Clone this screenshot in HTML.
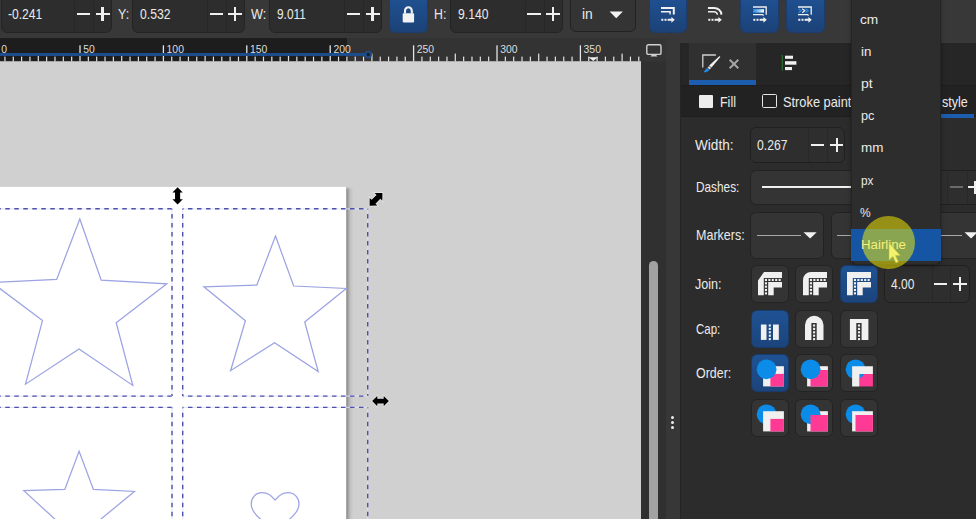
<!DOCTYPE html>
<html><head><meta charset="utf-8">
<style>
*{box-sizing:border-box;margin:0;padding:0}
html,body{width:976px;height:519px;overflow:hidden;background:#383838;font-family:"Liberation Sans",sans-serif;color:#e6e6e6;font-size:13px}
.abs{position:absolute;display:block}
#root{position:absolute;left:0;top:0;width:976px;height:519px;overflow:hidden;background:#383838}
.tx{position:absolute;display:block;white-space:nowrap;line-height:18px;height:18px;transform-origin:0 0;font-family:"Liberation Sans",sans-serif}
.pm{position:absolute;display:block;background:#efefef}
</style></head><body>
<div id="root">

<div class="abs" style="left:0px;top:0px;width:976px;height:39px;background:#383838;"></div>
<div class="abs" style="left:0.7px;top:-6px;width:111.7px;height:38.5px;background:#2d2d2d;border:1px solid #242424;border-radius:6px"></div><div class="abs" style="left:73.9px;top:-5px;width:1px;height:36.5px;background:#272727;"></div><div class="abs" style="left:93.10000000000001px;top:-5px;width:1px;height:36.5px;background:#272727;"></div><i class="pm" style="left:76.80000000000001px;top:13.35px;width:13.599999999999994px;height:2.1px"></i><i class="pm" style="left:95.5px;top:13.35px;width:14.0px;height:2.1px"></i><i class="pm" style="left:101.45px;top:7.4px;width:2.1px;height:14.0px"></i>
<span class="tx" style="left:7.50px;top:5.41px;font-size:14.8px;color:#eaeaea;transform:scaleX(0.8163);">-0.241</span>
<span class="tx" style="left:118.20px;top:5.21px;font-size:14.8px;color:#eaeaea;transform:scaleX(0.8427);">Y:</span>
<div class="abs" style="left:132.3px;top:-6px;width:113px;height:38.5px;background:#2d2d2d;border:1px solid #242424;border-radius:6px"></div><div class="abs" style="left:206.8px;top:-5px;width:1px;height:36.5px;background:#272727;"></div><div class="abs" style="left:226.0px;top:-5px;width:1px;height:36.5px;background:#272727;"></div><i class="pm" style="left:209.70000000000002px;top:13.35px;width:13.599999999999994px;height:2.1px"></i><i class="pm" style="left:228.4px;top:13.35px;width:14.0px;height:2.1px"></i><i class="pm" style="left:234.35px;top:7.4px;width:2.1px;height:14.0px"></i>
<span class="tx" style="left:139.50px;top:5.41px;font-size:14.8px;color:#eaeaea;transform:scaleX(0.8227);">0.532</span>
<span class="tx" style="left:251.00px;top:5.21px;font-size:14.8px;color:#eaeaea;transform:scaleX(0.8579);">W:</span>
<div class="abs" style="left:269.4px;top:-6px;width:113px;height:38.5px;background:#2d2d2d;border:1px solid #242424;border-radius:6px"></div><div class="abs" style="left:343.9px;top:-5px;width:1px;height:36.5px;background:#272727;"></div><div class="abs" style="left:363.09999999999997px;top:-5px;width:1px;height:36.5px;background:#272727;"></div><i class="pm" style="left:346.79999999999995px;top:13.35px;width:13.600000000000023px;height:2.1px"></i><i class="pm" style="left:365.5px;top:13.35px;width:14.0px;height:2.1px"></i><i class="pm" style="left:371.45px;top:7.4px;width:2.1px;height:14.0px"></i>
<span class="tx" style="left:276.80px;top:5.41px;font-size:14.8px;color:#eaeaea;transform:scaleX(0.8008);">9.011</span>
<div class="abs" style="left:389px;top:-6px;width:38.6px;height:39px;background:linear-gradient(#1f5091 10%,#1c4277);border:1px solid #1b3c6c;border-radius:6px"></div>
<svg class="abs" style="left:400px;top:4px;overflow:visible" width="18" height="20" viewBox="0 0 18 20"><rect x="2.7" y="9.3" width="11.4" height="9.1" rx="0.8" fill="#f2f2f2"/><path d="M5 9.5 V6.8 a3.4 3.6 0 0 1 6.8 0 V9.5" fill="none" stroke="#f2f2f2" stroke-width="2.1"/></svg>
<span class="tx" style="left:433.60px;top:5.21px;font-size:14.8px;color:#eaeaea;transform:scaleX(0.8311);">H:</span>
<div class="abs" style="left:450px;top:-6px;width:113px;height:38.5px;background:#2d2d2d;border:1px solid #242424;border-radius:6px"></div><div class="abs" style="left:524.5px;top:-5px;width:1px;height:36.5px;background:#272727;"></div><div class="abs" style="left:543.7px;top:-5px;width:1px;height:36.5px;background:#272727;"></div><i class="pm" style="left:527.4px;top:13.35px;width:13.600000000000023px;height:2.1px"></i><i class="pm" style="left:546.1px;top:13.35px;width:14.0px;height:2.1px"></i><i class="pm" style="left:552.0500000000001px;top:7.4px;width:2.1px;height:14.0px"></i>
<span class="tx" style="left:457.50px;top:5.41px;font-size:14.8px;color:#eaeaea;transform:scaleX(0.8227);">9.140</span>
<div class="abs" style="left:569.7px;top:-6px;width:66px;height:38.3px;background:#343434;border:1px solid #222;border-radius:6px"></div>
<span class="tx" style="left:582.40px;top:5.41px;font-size:14.8px;color:#eaeaea;transform:scaleX(0.9356);">in</span>
<svg class="abs" style="left:608.5px;top:10.6px;overflow:visible" width="15" height="8" viewBox="0 0 15 8"><path d="M0.6 0.6 H13.9 L7.25 7.2 Z" fill="#f2f2f2"/></svg>
<div class="abs" style="left:648.8px;top:-6px;width:38.5px;height:38.8px;background:linear-gradient(#1f5091 10%,#1c4277);border:1px solid #1b3c6c;border-radius:6px"></div>
<div class="abs" style="left:740.1px;top:-6px;width:38.5px;height:38.8px;background:linear-gradient(#1f5091 10%,#1c4277);border:1px solid #1b3c6c;border-radius:6px"></div>
<div class="abs" style="left:786px;top:-6px;width:38.5px;height:38.8px;background:linear-gradient(#1f5091 10%,#1c4277);border:1px solid #1b3c6c;border-radius:6px"></div>
<svg class="abs" style="left:661px;top:0px;overflow:visible" width="16" height="24" viewBox="0 0 16 24"><path d="M0 7.9 H12.8 V14.4" fill="none" stroke="#f0f0f0" stroke-width="2"/><path d="M0 11.7 H9.1 V14.4" fill="none" stroke="#f0f0f0" stroke-width="1.4"/><rect x="0.3" y="18.8" width="2" height="2" fill="#f0f0f0"/><rect x="3.5" y="18.8" width="2" height="2" fill="#f0f0f0"/><rect x="6.6" y="18.8" width="2" height="2" fill="#f0f0f0"/><path d="M8.2 18.8 H10.4 V16.9 L13.8 19.8 L10.4 22.7 V20.8 H8.2 Z" fill="#f0f0f0"/></svg>
<svg class="abs" style="left:707.6px;top:0px;overflow:visible" width="16" height="24" viewBox="0 0 16 24"><path d="M0 7.9 H6 A7.2 7 0 0 1 13.4 14.6" fill="none" stroke="#f0f0f0" stroke-width="2"/><path d="M0 11.7 H5.5 A3.8 3.4 0 0 1 9.4 14.8" fill="none" stroke="#f0f0f0" stroke-width="1.4"/><rect x="0.3" y="18.8" width="2" height="2" fill="#f0f0f0"/><rect x="3.5" y="18.8" width="2" height="2" fill="#f0f0f0"/><rect x="6.6" y="18.8" width="2" height="2" fill="#f0f0f0"/><path d="M8.2 18.8 H10.4 V16.9 L13.8 19.8 L10.4 22.7 V20.8 H8.2 Z" fill="#f0f0f0"/></svg>
<svg class="abs" style="left:752.6px;top:0px;overflow:visible" width="16" height="24" viewBox="0 0 16 24"><path d="M0 7 H13.2 V14.8" fill="none" stroke="#f0f0f0" stroke-width="1.3"/><defs><linearGradient id="gc" x1="0" x2="1"><stop offset="0" stop-color="#1e8be6"/><stop offset="0.55" stop-color="#8fc8f4"/><stop offset="1" stop-color="#ffffff"/></linearGradient></defs><rect x="0" y="9.2" width="11" height="3.4" fill="url(#gc)"/><path d="M0 14.6 H9.5 L10.6 15.6" fill="none" stroke="#f0f0f0" stroke-width="1.4"/><rect x="0.3" y="18.8" width="2" height="2" fill="#f0f0f0"/><rect x="3.5" y="18.8" width="2" height="2" fill="#f0f0f0"/><rect x="6.6" y="18.8" width="2" height="2" fill="#f0f0f0"/><path d="M8.2 18.8 H10.4 V16.9 L13.8 19.8 L10.4 22.7 V20.8 H8.2 Z" fill="#f0f0f0"/></svg>
<svg class="abs" style="left:798.4px;top:0px;overflow:visible" width="16" height="24" viewBox="0 0 16 24"><path d="M0 7 H13.2 V14.8" fill="none" stroke="#f0f0f0" stroke-width="1.3"/><path d="M0.6 8.8 L3.2 10.8 L0.6 12.8" fill="none" stroke="#2a8de6" stroke-width="1.2"/><path d="M4.2 8.8 L6.8 10.8 L4.2 12.8" fill="none" stroke="#f0f0f0" stroke-width="1.2"/><path d="M7.6 8.8 L10.2 10.8 L7.6 12.8" fill="none" stroke="#2a8de6" stroke-width="1.2"/><path d="M0 14.6 H9.5 L10.6 15.6" fill="none" stroke="#f0f0f0" stroke-width="1.4"/><rect x="0.3" y="18.8" width="2" height="2" fill="#f0f0f0"/><rect x="3.5" y="18.8" width="2" height="2" fill="#f0f0f0"/><rect x="6.6" y="18.8" width="2" height="2" fill="#f0f0f0"/><path d="M8.2 18.8 H10.4 V16.9 L13.8 19.8 L10.4 22.7 V20.8 H8.2 Z" fill="#f0f0f0"/></svg>
<svg class="abs" style="left:0px;top:38px;overflow:visible" width="641" height="24" viewBox="0 0 641 24"><rect x="0" y="0" width="641" height="24" fill="#333333"/><rect x="0" y="0.1" width="347" height="23.9" fill="#1d1d1d"/><rect x="4.34" y="18.6" width="1.2" height="4.8" fill="#e4e4e4"/><rect x="12.68" y="18.6" width="1.2" height="4.8" fill="#e4e4e4"/><rect x="21.02" y="18.6" width="1.2" height="4.8" fill="#e4e4e4"/><rect x="29.36" y="18.6" width="1.2" height="4.8" fill="#e4e4e4"/><rect x="37.70" y="15.6" width="1.2" height="7.8" fill="#e4e4e4"/><rect x="46.04" y="18.6" width="1.2" height="4.8" fill="#e4e4e4"/><rect x="54.38" y="18.6" width="1.2" height="4.8" fill="#e4e4e4"/><rect x="62.72" y="18.6" width="1.2" height="4.8" fill="#e4e4e4"/><rect x="71.06" y="18.6" width="1.2" height="4.8" fill="#e4e4e4"/><rect x="79.35" y="7.3" width="1.3" height="16.1" fill="#e4e4e4"/><text x="83.2" y="15.3" font-size="10.4" fill="#dcdcdc" font-family="Liberation Sans, sans-serif">50</text><rect x="87.74" y="18.6" width="1.2" height="4.8" fill="#e4e4e4"/><rect x="96.08" y="18.6" width="1.2" height="4.8" fill="#e4e4e4"/><rect x="104.42" y="18.6" width="1.2" height="4.8" fill="#e4e4e4"/><rect x="112.76" y="18.6" width="1.2" height="4.8" fill="#e4e4e4"/><rect x="121.10" y="15.6" width="1.2" height="7.8" fill="#e4e4e4"/><rect x="129.44" y="18.6" width="1.2" height="4.8" fill="#e4e4e4"/><rect x="137.78" y="18.6" width="1.2" height="4.8" fill="#e4e4e4"/><rect x="146.12" y="18.6" width="1.2" height="4.8" fill="#e4e4e4"/><rect x="154.46" y="18.6" width="1.2" height="4.8" fill="#e4e4e4"/><rect x="162.75" y="7.3" width="1.3" height="16.1" fill="#e4e4e4"/><text x="166.6" y="15.3" font-size="10.4" fill="#dcdcdc" font-family="Liberation Sans, sans-serif">100</text><rect x="171.14" y="18.6" width="1.2" height="4.8" fill="#e4e4e4"/><rect x="179.48" y="18.6" width="1.2" height="4.8" fill="#e4e4e4"/><rect x="187.82" y="18.6" width="1.2" height="4.8" fill="#e4e4e4"/><rect x="196.16" y="18.6" width="1.2" height="4.8" fill="#e4e4e4"/><rect x="204.50" y="15.6" width="1.2" height="7.8" fill="#e4e4e4"/><rect x="212.84" y="18.6" width="1.2" height="4.8" fill="#e4e4e4"/><rect x="221.18" y="18.6" width="1.2" height="4.8" fill="#e4e4e4"/><rect x="229.52" y="18.6" width="1.2" height="4.8" fill="#e4e4e4"/><rect x="237.86" y="18.6" width="1.2" height="4.8" fill="#e4e4e4"/><rect x="246.15" y="7.3" width="1.3" height="16.1" fill="#e4e4e4"/><text x="250.0" y="15.3" font-size="10.4" fill="#dcdcdc" font-family="Liberation Sans, sans-serif">150</text><rect x="254.54" y="18.6" width="1.2" height="4.8" fill="#e4e4e4"/><rect x="262.88" y="18.6" width="1.2" height="4.8" fill="#e4e4e4"/><rect x="271.22" y="18.6" width="1.2" height="4.8" fill="#e4e4e4"/><rect x="279.56" y="18.6" width="1.2" height="4.8" fill="#e4e4e4"/><rect x="287.90" y="15.6" width="1.2" height="7.8" fill="#e4e4e4"/><rect x="296.24" y="18.6" width="1.2" height="4.8" fill="#e4e4e4"/><rect x="304.58" y="18.6" width="1.2" height="4.8" fill="#e4e4e4"/><rect x="312.92" y="18.6" width="1.2" height="4.8" fill="#e4e4e4"/><rect x="321.26" y="18.6" width="1.2" height="4.8" fill="#e4e4e4"/><rect x="329.55" y="7.3" width="1.3" height="16.1" fill="#e4e4e4"/><text x="333.4" y="15.3" font-size="10.4" fill="#dcdcdc" font-family="Liberation Sans, sans-serif">200</text><rect x="337.94" y="18.6" width="1.2" height="4.8" fill="#e4e4e4"/><rect x="346.28" y="18.6" width="1.2" height="4.8" fill="#e4e4e4"/><rect x="354.62" y="18.6" width="1.2" height="4.8" fill="#e4e4e4"/><rect x="362.96" y="18.6" width="1.2" height="4.8" fill="#e4e4e4"/><rect x="371.30" y="15.6" width="1.2" height="7.8" fill="#e4e4e4"/><rect x="379.64" y="18.6" width="1.2" height="4.8" fill="#e4e4e4"/><rect x="387.98" y="18.6" width="1.2" height="4.8" fill="#e4e4e4"/><rect x="396.32" y="18.6" width="1.2" height="4.8" fill="#e4e4e4"/><rect x="404.66" y="18.6" width="1.2" height="4.8" fill="#e4e4e4"/><rect x="412.95" y="7.3" width="1.3" height="16.1" fill="#e4e4e4"/><text x="416.8" y="15.3" font-size="10.4" fill="#dcdcdc" font-family="Liberation Sans, sans-serif">250</text><rect x="421.34" y="18.6" width="1.2" height="4.8" fill="#e4e4e4"/><rect x="429.68" y="18.6" width="1.2" height="4.8" fill="#e4e4e4"/><rect x="438.02" y="18.6" width="1.2" height="4.8" fill="#e4e4e4"/><rect x="446.36" y="18.6" width="1.2" height="4.8" fill="#e4e4e4"/><rect x="454.70" y="15.6" width="1.2" height="7.8" fill="#e4e4e4"/><rect x="463.04" y="18.6" width="1.2" height="4.8" fill="#e4e4e4"/><rect x="471.38" y="18.6" width="1.2" height="4.8" fill="#e4e4e4"/><rect x="479.72" y="18.6" width="1.2" height="4.8" fill="#e4e4e4"/><rect x="488.06" y="18.6" width="1.2" height="4.8" fill="#e4e4e4"/><rect x="496.35" y="7.3" width="1.3" height="16.1" fill="#e4e4e4"/><text x="500.2" y="15.3" font-size="10.4" fill="#dcdcdc" font-family="Liberation Sans, sans-serif">300</text><rect x="504.74" y="18.6" width="1.2" height="4.8" fill="#e4e4e4"/><rect x="513.08" y="18.6" width="1.2" height="4.8" fill="#e4e4e4"/><rect x="521.42" y="18.6" width="1.2" height="4.8" fill="#e4e4e4"/><rect x="529.76" y="18.6" width="1.2" height="4.8" fill="#e4e4e4"/><rect x="538.10" y="15.6" width="1.2" height="7.8" fill="#e4e4e4"/><rect x="546.44" y="18.6" width="1.2" height="4.8" fill="#e4e4e4"/><rect x="554.78" y="18.6" width="1.2" height="4.8" fill="#e4e4e4"/><rect x="563.12" y="18.6" width="1.2" height="4.8" fill="#e4e4e4"/><rect x="571.46" y="18.6" width="1.2" height="4.8" fill="#e4e4e4"/><rect x="579.75" y="7.3" width="1.3" height="16.1" fill="#e4e4e4"/><text x="583.6" y="15.3" font-size="10.4" fill="#dcdcdc" font-family="Liberation Sans, sans-serif">350</text><rect x="588.14" y="18.6" width="1.2" height="4.8" fill="#e4e4e4"/><rect x="596.48" y="18.6" width="1.2" height="4.8" fill="#e4e4e4"/><rect x="604.82" y="18.6" width="1.2" height="4.8" fill="#e4e4e4"/><rect x="613.16" y="18.6" width="1.2" height="4.8" fill="#e4e4e4"/><rect x="621.50" y="15.6" width="1.2" height="7.8" fill="#e4e4e4"/><rect x="629.84" y="18.6" width="1.2" height="4.8" fill="#e4e4e4"/><rect x="638.18" y="18.6" width="1.2" height="4.8" fill="#e4e4e4"/><rect x="0" y="15" width="366" height="3" fill="#1c4d8a"/><text x="1.3" y="15.3" font-size="10.4" fill="#dcdcdc" font-family="Liberation Sans, sans-serif">0</text><circle cx="368.3" cy="16.5" r="2.7" fill="#1c1c1c" stroke="#1c4d8a" stroke-width="2"/><rect x="0" y="23.3" width="641" height="0.7" fill="#e2e2e2"/><path d="M588.5 19.3 H598 L593.25 23 Z" fill="#f0f0f0"/></svg>
<svg class="abs" style="left:0;top:62px" width="641" height="457" viewBox="0 62 641 457"><rect x="0" y="62" width="641" height="457" fill="#d0d0d0"/><defs><linearGradient id="sh" x1="0" x2="1" y1="0" y2="0"><stop offset="0" stop-color="#7c7c7c"/><stop offset="0.25" stop-color="#a2a2a2"/><stop offset="0.6" stop-color="#c3c3c3"/><stop offset="1" stop-color="#d0d0d0"/></linearGradient><linearGradient id="sh2" x1="0" x2="0" y1="0" y2="1"><stop offset="0" stop-color="#d0d0d0"/><stop offset="1" stop-color="#d0d0d0" stop-opacity="0"/></linearGradient></defs><rect x="346.2" y="187" width="7.3" height="332" fill="url(#sh)"/><rect x="346.2" y="186.5" width="7.5" height="3.5" fill="url(#sh2)"/><rect x="-5" y="186.9" width="351.2" height="340" fill="#ffffff"/><polygon points="79.8,219 101.2,280.2 166.8,283.8 116.2,322.7 132.8,385.4 79,349 25.5,384.2 42.5,320.6 -8,282.6 56.7,279.4" fill="none" stroke="#9ca3e3" stroke-width="1.25"/><polygon points="275.5,236 293.7,286 346.2,288.5 304.7,322 318.2,371.5 274.6,342.7 230.6,370.7 245.4,320.7 203.9,286.8 256.8,285.1" fill="none" stroke="#9ca3e3" stroke-width="1.25"/><polyline points="100.4,519.5 134.4,491.5 93.4,489.4 79.1,451.3 64.8,489.4 23.8,490.7 55.3,519.5" fill="none" stroke="#9ca3e3" stroke-width="1.25"/><path d="M275.1 500.2 C271 494.8 266.5 492.7 262.3 492.7 C255.5 492.7 251.2 498 251.2 504 C251.2 510.5 255.5 515 261.5 520 M275.1 500.2 C279.2 494.8 283.7 492.7 287.9 492.7 C294.7 492.7 299 498 299 504 C299 510.5 294.7 515 288.7 520" fill="none" stroke="#9ca3e3" stroke-width="1.25"/><line x1="0" y1="208.8" x2="172.0" y2="208.8" stroke="#dfe1f7" stroke-opacity="0.75" stroke-width="1.2"/><line x1="0" y1="208.8" x2="172.0" y2="208.8" stroke="#4b52a8" stroke-width="1.4" stroke-dasharray="4.5 4.5" stroke-dashoffset="3.7"/><line x1="172.0" y1="208.8" x2="172.0" y2="396.1" stroke="#dfe1f7" stroke-opacity="0.75" stroke-width="1.2"/><line x1="172.0" y1="208.8" x2="172.0" y2="396.1" stroke="#4b52a8" stroke-width="1.4" stroke-dasharray="4.5 4.5" stroke-dashoffset="3.7"/><line x1="0" y1="396.1" x2="172.0" y2="396.1" stroke="#dfe1f7" stroke-opacity="0.75" stroke-width="1.2"/><line x1="0" y1="396.1" x2="172.0" y2="396.1" stroke="#4b52a8" stroke-width="1.4" stroke-dasharray="4.5 4.5" stroke-dashoffset="3.7"/><line x1="182.7" y1="208.8" x2="367.7" y2="208.8" stroke="#dfe1f7" stroke-opacity="0.75" stroke-width="1.2"/><line x1="182.7" y1="208.8" x2="367.7" y2="208.8" stroke="#4b52a8" stroke-width="1.4" stroke-dasharray="4.5 4.5" stroke-dashoffset="3.7"/><line x1="367.7" y1="208.8" x2="367.7" y2="396.1" stroke="#dfe1f7" stroke-opacity="0.75" stroke-width="1.2"/><line x1="367.7" y1="208.8" x2="367.7" y2="396.1" stroke="#4b52a8" stroke-width="1.4" stroke-dasharray="4.5 4.5" stroke-dashoffset="3.7"/><line x1="182.7" y1="396.1" x2="367.7" y2="396.1" stroke="#dfe1f7" stroke-opacity="0.75" stroke-width="1.2"/><line x1="182.7" y1="396.1" x2="367.7" y2="396.1" stroke="#4b52a8" stroke-width="1.4" stroke-dasharray="4.5 4.5" stroke-dashoffset="3.7"/><line x1="182.7" y1="208.8" x2="182.7" y2="396.1" stroke="#dfe1f7" stroke-opacity="0.75" stroke-width="1.2"/><line x1="182.7" y1="208.8" x2="182.7" y2="396.1" stroke="#4b52a8" stroke-width="1.4" stroke-dasharray="4.5 4.5" stroke-dashoffset="3.7"/><line x1="0" y1="407.4" x2="172.0" y2="407.4" stroke="#dfe1f7" stroke-opacity="0.75" stroke-width="1.2"/><line x1="0" y1="407.4" x2="172.0" y2="407.4" stroke="#4b52a8" stroke-width="1.4" stroke-dasharray="4.5 4.5" stroke-dashoffset="3.7"/><line x1="172.0" y1="407.4" x2="172.0" y2="520" stroke="#dfe1f7" stroke-opacity="0.75" stroke-width="1.2"/><line x1="172.0" y1="407.4" x2="172.0" y2="520" stroke="#4b52a8" stroke-width="1.4" stroke-dasharray="4.5 4.5" stroke-dashoffset="3.7"/><line x1="182.7" y1="407.4" x2="367.7" y2="407.4" stroke="#dfe1f7" stroke-opacity="0.75" stroke-width="1.2"/><line x1="182.7" y1="407.4" x2="367.7" y2="407.4" stroke="#4b52a8" stroke-width="1.4" stroke-dasharray="4.5 4.5" stroke-dashoffset="3.7"/><line x1="182.7" y1="407.4" x2="182.7" y2="520" stroke="#dfe1f7" stroke-opacity="0.75" stroke-width="1.2"/><line x1="182.7" y1="407.4" x2="182.7" y2="520" stroke="#4b52a8" stroke-width="1.4" stroke-dasharray="4.5 4.5" stroke-dashoffset="3.7"/><line x1="367.7" y1="407.4" x2="367.7" y2="520" stroke="#dfe1f7" stroke-opacity="0.75" stroke-width="1.2"/><line x1="367.7" y1="407.4" x2="367.7" y2="520" stroke="#4b52a8" stroke-width="1.4" stroke-dasharray="4.5 4.5" stroke-dashoffset="3.7"/><g transform="translate(177.6,195.9) rotate(0) scale(1)"><path d="M0 -8.6 L5.2 -3.3 H2.55 V3.3 H5.2 L0 8.6 L-5.2 3.3 H-2.55 V-3.3 H-5.2 Z" fill="#000" stroke="rgba(255,255,255,0.45)" stroke-width="1.6" paint-order="stroke"/></g><g transform="translate(380.5,401.1) rotate(90) scale(0.97)"><path d="M0 -8.6 L5.2 -3.3 H2.55 V3.3 H5.2 L0 8.6 L-5.2 3.3 H-2.55 V-3.3 H-5.2 Z" fill="#000" stroke="rgba(255,255,255,0.45)" stroke-width="1.6" paint-order="stroke"/></g><g transform="translate(376,199.3) rotate(45) scale(1.05)"><path d="M0 -8.6 L5.2 -3.3 H2.55 V3.3 H5.2 L0 8.6 L-5.2 3.3 H-2.55 V-3.3 H-5.2 Z" fill="#000" stroke="rgba(255,255,255,0.45)" stroke-width="1.6" paint-order="stroke"/></g></svg>
<div class="abs" style="left:641px;top:38px;width:25px;height:481px;background:#303030;"></div>
<div class="abs" style="left:641px;top:38px;width:25px;height:24px;background:#343434;"></div>
<div class="abs" style="left:666px;top:38px;width:14px;height:481px;background:#373737;"></div>
<svg class="abs" style="left:646px;top:43.6px;overflow:visible" width="16" height="14" viewBox="0 0 16 14"><rect x="0.8" y="0.8" width="14.2" height="9.6" rx="1.5" fill="none" stroke="#d0d0d0" stroke-width="1.4"/><path d="M5.8 10.8 H10 L11.4 12.4 H4.4 Z" fill="#d0d0d0"/></svg>
<div class="abs" style="left:670.6px;top:415.5px;width:3.7px;height:3.7px;background:#ececec;border-radius:50%"></div>
<div class="abs" style="left:670.6px;top:420.6px;width:3.7px;height:3.7px;background:#ececec;border-radius:50%"></div>
<div class="abs" style="left:670.6px;top:425.7px;width:3.7px;height:3.7px;background:#ececec;border-radius:50%"></div>
<div class="abs" style="left:649.2px;top:260.6px;width:9.2px;height:270px;background:#a2a2a2;border-radius:4.6px"></div>
<div class="abs" style="left:680px;top:43px;width:296px;height:476px;background:#2c2c2c;"></div>
<div class="abs" style="left:680px;top:43px;width:296px;height:42px;background:#262626;"></div>
<div class="abs" style="left:689px;top:43px;width:67.3px;height:42px;background:#303030;"></div>
<div class="abs" style="left:689px;top:80px;width:67.3px;height:5px;background:#1c5db0;"></div>
<div class="abs" style="left:680px;top:85px;width:296px;height:31px;background:#222222;"></div>
<div class="abs" style="left:680px;top:85px;width:296px;height:1px;background:#1e1e1e;"></div>
<div class="abs" style="left:680px;top:115.5px;width:296px;height:1px;background:#1e1e1e;"></div>
<div class="abs" style="left:698.7px;top:94.5px;width:14.3px;height:13.8px;background:#ececec;border-radius:1px"></div>
<span class="tx" style="left:720.00px;top:93.11px;font-size:14.8px;color:#eaeaea;transform:scaleX(0.8426);">Fill</span>
<div class="abs" style="left:762.2px;top:94.4px;width:14.4px;height:13.9px;background:transparent;border:1.6px solid #e6e6e6;border-radius:1.5px"></div>
<span class="tx" style="left:783.40px;top:92.91px;font-size:14.8px;color:#eaeaea;transform:scaleX(0.8653);">Stroke paint</span>
<span class="tx" style="left:941.80px;top:92.91px;font-size:14.8px;color:#eaeaea;transform:scaleX(0.8483);">style</span>
<div class="abs" style="left:941px;top:114px;width:33px;height:3.6px;background:#1c5db0;"></div>
<div class="abs" style="left:680px;top:43px;width:1px;height:476px;background:#242424;"></div>
<span class="tx" style="left:694.75px;top:135.61px;font-size:14.8px;color:#eaeaea;transform:scaleX(0.9188);">Width:</span>
<span class="tx" style="left:695.60px;top:177.81px;font-size:14.8px;color:#eaeaea;transform:scaleX(0.7990);">Dashes:</span>
<span class="tx" style="left:695.60px;top:225.81px;font-size:14.8px;color:#eaeaea;transform:scaleX(0.8459);">Markers:</span>
<span class="tx" style="left:694.50px;top:274.71px;font-size:14.8px;color:#eaeaea;transform:scaleX(0.8518);">Join:</span>
<span class="tx" style="left:695.70px;top:319.61px;font-size:14.8px;color:#eaeaea;transform:scaleX(0.7749);">Cap:</span>
<span class="tx" style="left:695.70px;top:364.01px;font-size:14.8px;color:#eaeaea;transform:scaleX(0.8413);">Order:</span>
<div class="abs" style="left:749.7px;top:126.6px;width:95.6px;height:36.8px;background:#2e2e2e;border:1px solid #202020;border-radius:6px"></div><div class="abs" style="left:808px;top:127.6px;width:1px;height:34.8px;background:#282828;"></div><div class="abs" style="left:827px;top:127.6px;width:1px;height:34.8px;background:#282828;"></div><i class="pm" style="left:811px;top:143.95px;width:12.5px;height:2.1px"></i><i class="pm" style="left:830px;top:143.95px;width:13.399999999999977px;height:2.1px"></i><i class="pm" style="left:835.6500000000001px;top:138.3px;width:2.1px;height:13.399999999999977px"></i>
<span class="tx" style="left:757.00px;top:135.71px;font-size:14.8px;color:#eaeaea;transform:scaleX(0.8227);">0.267</span>
<div class="abs" style="left:749.7px;top:169.6px;width:160px;height:35.6px;background:#343434;border:1px solid #222;border-radius:6px"></div>
<div class="abs" style="left:762px;top:186.3px;width:100px;height:2px;background:#f0f0f0;"></div>
<div class="abs" style="left:916px;top:169.6px;width:80px;height:35.6px;background:#2e2e2e;border:1px solid #202020;border-radius:6px"></div>
<div class="abs" style="left:947.4px;top:170.6px;width:1px;height:33.6px;background:#282828;"></div><div class="abs" style="left:966.8px;top:170.6px;width:1px;height:33.6px;background:#282828;"></div>
<div class="abs" style="left:950.3px;top:186.4px;width:12.7px;height:2px;background:#6a6a6a;"></div>
<i class="pm" style="left:968.3px;top:186.4px;width:13.4px;height:2.1px"></i><i class="pm" style="left:974px;top:180.7px;width:2.1px;height:13.4px"></i>
<div class="abs" style="left:750.3px;top:211.6px;width:73.8px;height:47.2px;background:#343434;border:1px solid #222;border-radius:6px"></div><div class="abs" style="left:756.5999999999999px;top:235.1px;width:44.5px;height:1px;background:#a8a8a8;"></div><svg class="abs" style="left:802.8px;top:232px;overflow:visible" width="15" height="8" viewBox="0 0 15 8"><path d="M0.5 0.2 H13.7 L7.1 6.6 Z" fill="#f2f2f2"/></svg><div class="abs" style="left:830.9px;top:211.6px;width:73.8px;height:47.2px;background:#343434;border:1px solid #222;border-radius:6px"></div><div class="abs" style="left:837.1999999999999px;top:235.1px;width:44.5px;height:1px;background:#a8a8a8;"></div><svg class="abs" style="left:883.4px;top:232px;overflow:visible" width="15" height="8" viewBox="0 0 15 8"><path d="M0.5 0.2 H13.7 L7.1 6.6 Z" fill="#f2f2f2"/></svg><div class="abs" style="left:911.5px;top:211.6px;width:73.8px;height:47.2px;background:#343434;border:1px solid #222;border-radius:6px"></div><div class="abs" style="left:917.8px;top:235.1px;width:44.5px;height:1px;background:#a8a8a8;"></div><svg class="abs" style="left:964.0px;top:232px;overflow:visible" width="15" height="8" viewBox="0 0 15 8"><path d="M0.5 0.2 H13.7 L7.1 6.6 Z" fill="#f2f2f2"/></svg>
<div class="abs" style="left:750.6px;top:265px;width:38px;height:38px;background:#343434;border:1px solid #232323;border-radius:6px"></div><div class="abs" style="left:750.6px;top:309.7px;width:38px;height:38px;background:linear-gradient(#1f5293,#1c447c);border:1px solid #1a3a68;border-radius:6px"></div><div class="abs" style="left:750.6px;top:354.3px;width:38px;height:38px;background:linear-gradient(#1f5293,#1c447c);border:1px solid #1a3a68;border-radius:6px"></div><div class="abs" style="left:750.6px;top:398.8px;width:38px;height:38px;background:#343434;border:1px solid #232323;border-radius:6px"></div>
<div class="abs" style="left:795px;top:265px;width:38px;height:38px;background:#343434;border:1px solid #232323;border-radius:6px"></div><div class="abs" style="left:795px;top:309.7px;width:38px;height:38px;background:#343434;border:1px solid #232323;border-radius:6px"></div><div class="abs" style="left:795px;top:354.3px;width:38px;height:38px;background:#343434;border:1px solid #232323;border-radius:6px"></div><div class="abs" style="left:795px;top:398.8px;width:38px;height:38px;background:#343434;border:1px solid #232323;border-radius:6px"></div>
<div class="abs" style="left:839.7px;top:265px;width:38px;height:38px;background:linear-gradient(#1f5293,#1c447c);border:1px solid #1a3a68;border-radius:6px"></div><div class="abs" style="left:839.7px;top:309.7px;width:38px;height:38px;background:#343434;border:1px solid #232323;border-radius:6px"></div><div class="abs" style="left:839.7px;top:354.3px;width:38px;height:38px;background:#343434;border:1px solid #232323;border-radius:6px"></div><div class="abs" style="left:839.7px;top:398.8px;width:38px;height:38px;background:#343434;border:1px solid #232323;border-radius:6px"></div>
<div class="abs" style="left:883.7px;top:265px;width:86px;height:38px;background:#2e2e2e;border:1px solid #202020;border-radius:6px"></div><div class="abs" style="left:931.8px;top:266px;width:1px;height:36px;background:#282828;"></div><div class="abs" style="left:950.4px;top:266px;width:1px;height:36px;background:#282828;"></div><i class="pm" style="left:934.4px;top:282.95px;width:13.100000000000023px;height:2.1px"></i><i class="pm" style="left:953.3px;top:282.95px;width:13.400000000000091px;height:2.1px"></i><i class="pm" style="left:958.95px;top:277.29999999999995px;width:2.1px;height:13.400000000000091px"></i>
<span class="tx" style="left:890.70px;top:274.91px;font-size:14.8px;color:#eaeaea;transform:scaleX(0.8094);">4.00</span>
<svg class="abs" style="left:758.2px;top:272.2px;overflow:visible" width="24" height="24" viewBox="0 0 24 24"><path d="M0 23.2 V8.5 L6 0 H24 V15.5 H15.7 V23.2 Z M5.8 23.2 V5.9 H24 V10 H10.2 V23.2 Z" fill="#f0f0f0" fill-rule="evenodd"/><rect x="6.90" y="6.9" width="2.1" height="2.1" fill="#f0f0f0"/><rect x="10.32" y="6.9" width="2.1" height="2.1" fill="#f0f0f0"/><rect x="13.74" y="6.9" width="2.1" height="2.1" fill="#f0f0f0"/><rect x="17.16" y="6.9" width="2.1" height="2.1" fill="#f0f0f0"/><rect x="20.58" y="6.9" width="2.1" height="2.1" fill="#f0f0f0"/><rect x="6.9" y="10.25" width="2.1" height="2.1" fill="#f0f0f0"/><rect x="6.9" y="13.60" width="2.1" height="2.1" fill="#f0f0f0"/><rect x="6.9" y="16.95" width="2.1" height="2.1" fill="#f0f0f0"/><rect x="6.9" y="20.30" width="2.1" height="2.1" fill="#f0f0f0"/></svg>
<svg class="abs" style="left:802.6px;top:272.2px;overflow:visible" width="24" height="24" viewBox="0 0 24 24"><path d="M0 23.2 V8 A8 8 0 0 1 8 0 H24 V15.5 H15.7 V23.2 Z M5.8 23.2 V5.9 H24 V10 H10.2 V23.2 Z" fill="#f0f0f0" fill-rule="evenodd"/><rect x="6.90" y="6.9" width="2.1" height="2.1" fill="#f0f0f0"/><rect x="10.32" y="6.9" width="2.1" height="2.1" fill="#f0f0f0"/><rect x="13.74" y="6.9" width="2.1" height="2.1" fill="#f0f0f0"/><rect x="17.16" y="6.9" width="2.1" height="2.1" fill="#f0f0f0"/><rect x="20.58" y="6.9" width="2.1" height="2.1" fill="#f0f0f0"/><rect x="6.9" y="10.25" width="2.1" height="2.1" fill="#f0f0f0"/><rect x="6.9" y="13.60" width="2.1" height="2.1" fill="#f0f0f0"/><rect x="6.9" y="16.95" width="2.1" height="2.1" fill="#f0f0f0"/><rect x="6.9" y="20.30" width="2.1" height="2.1" fill="#f0f0f0"/></svg>
<svg class="abs" style="left:847.3000000000001px;top:272.2px;overflow:visible" width="24" height="24" viewBox="0 0 24 24"><path d="M0 23.2 V0 H24 V15.5 H15.7 V23.2 Z M5.8 23.2 V5.9 H24 V10 H10.2 V23.2 Z" fill="#f0f0f0" fill-rule="evenodd"/><rect x="6.90" y="6.9" width="2.1" height="2.1" fill="#f0f0f0"/><rect x="10.32" y="6.9" width="2.1" height="2.1" fill="#f0f0f0"/><rect x="13.74" y="6.9" width="2.1" height="2.1" fill="#f0f0f0"/><rect x="17.16" y="6.9" width="2.1" height="2.1" fill="#f0f0f0"/><rect x="20.58" y="6.9" width="2.1" height="2.1" fill="#f0f0f0"/><rect x="6.9" y="10.25" width="2.1" height="2.1" fill="#f0f0f0"/><rect x="6.9" y="13.60" width="2.1" height="2.1" fill="#f0f0f0"/><rect x="6.9" y="16.95" width="2.1" height="2.1" fill="#f0f0f0"/><rect x="6.9" y="20.30" width="2.1" height="2.1" fill="#f0f0f0"/></svg>
<svg class="abs" style="left:750.6px;top:309.7px;overflow:visible" width="38" height="38" viewBox="0 0 38 38"><rect x="9.9" y="14.5" width="5.6" height="15.4" fill="#f0f0f0"/><rect x="22" y="14.5" width="5.8" height="15.4" fill="#f0f0f0"/><rect x="17.75" y="14.45" width="2.1" height="2.1" fill="#f0f0f0"/><rect x="17.75" y="17.85" width="2.1" height="2.1" fill="#f0f0f0"/><rect x="17.75" y="21.25" width="2.1" height="2.1" fill="#f0f0f0"/><rect x="17.75" y="24.65" width="2.1" height="2.1" fill="#f0f0f0"/><rect x="17.75" y="28.05" width="2.1" height="2.1" fill="#f0f0f0"/></svg>
<svg class="abs" style="left:795px;top:309.7px;overflow:visible" width="38" height="38" viewBox="0 0 38 38"><path d="M10 29.9 V15 A9.25 9.25 0 0 1 28.5 15 V29.9 Z M16.4 29.9 V12.9 H21.7 V29.9 Z" fill="#f0f0f0" fill-rule="evenodd"/><rect x="18.05" y="14.45" width="2.1" height="2.1" fill="#f0f0f0"/><rect x="18.05" y="17.85" width="2.1" height="2.1" fill="#f0f0f0"/><rect x="18.05" y="21.25" width="2.1" height="2.1" fill="#f0f0f0"/><rect x="18.05" y="24.65" width="2.1" height="2.1" fill="#f0f0f0"/><rect x="18.05" y="28.05" width="2.1" height="2.1" fill="#f0f0f0"/></svg>
<svg class="abs" style="left:839.7px;top:309.7px;overflow:visible" width="38" height="38" viewBox="0 0 38 38"><path d="M9.9 29.9 V9 H28.4 V29.9 Z M16.3 29.9 V12.9 H21.6 V29.9 Z" fill="#f0f0f0" fill-rule="evenodd"/><rect x="17.95" y="14.45" width="2.1" height="2.1" fill="#f0f0f0"/><rect x="17.95" y="17.85" width="2.1" height="2.1" fill="#f0f0f0"/><rect x="17.95" y="21.25" width="2.1" height="2.1" fill="#f0f0f0"/><rect x="17.95" y="24.65" width="2.1" height="2.1" fill="#f0f0f0"/><rect x="17.95" y="28.05" width="2.1" height="2.1" fill="#f0f0f0"/></svg>
<svg class="abs" style="left:750.6px;top:354.3px;overflow:visible" width="38" height="38" viewBox="0 0 38 38"><rect x="12.1" y="12.2" width="20.8" height="20.2" fill="#f0f0f0"/><rect x="19.4" y="19.9" width="13.5" height="12.5" fill="#ff3a94"/><circle cx="15.6" cy="15.3" r="9.9" fill="#0a8ce8"/></svg><svg class="abs" style="left:795px;top:354.3px;overflow:visible" width="38" height="38" viewBox="0 0 38 38"><rect x="12.1" y="12.2" width="20.8" height="20.2" fill="#f0f0f0"/><rect x="15.5" y="16" width="17.4" height="16.4" fill="#ff3a94"/><circle cx="15.6" cy="15.3" r="9.9" fill="#0a8ce8"/></svg><svg class="abs" style="left:839.7px;top:354.3px;overflow:visible" width="38" height="38" viewBox="0 0 38 38"><rect x="19.4" y="19.9" width="13.5" height="12.5" fill="#ff3a94"/><circle cx="15.6" cy="15.3" r="9.9" fill="#0a8ce8"/><path d="M12.1 12.2 H32.9 V19.9 H19.4 V32.4 H12.1 Z" fill="#f0f0f0"/></svg>
<svg class="abs" style="left:750.6px;top:398.8px;overflow:visible" width="38" height="38" viewBox="0 0 38 38"><circle cx="15.6" cy="15.3" r="9.9" fill="#0a8ce8"/><rect x="12.1" y="12.2" width="20.8" height="20.2" fill="#f0f0f0"/><rect x="19.4" y="19.9" width="13.5" height="12.5" fill="#ff3a94"/></svg><svg class="abs" style="left:795px;top:398.8px;overflow:visible" width="38" height="38" viewBox="0 0 38 38"><rect x="12.1" y="12.2" width="20.8" height="20.2" fill="#f0f0f0"/><circle cx="15.6" cy="15.3" r="9.9" fill="#0a8ce8"/><rect x="15.5" y="16" width="17.4" height="16.4" fill="#ff3a94"/></svg><svg class="abs" style="left:839.7px;top:398.8px;overflow:visible" width="38" height="38" viewBox="0 0 38 38"><circle cx="15.6" cy="15.3" r="9.9" fill="#0a8ce8"/><rect x="12.1" y="12.2" width="20.8" height="20.2" fill="#f0f0f0"/><rect x="15.5" y="16" width="17.4" height="16.4" fill="#ff3a94"/></svg>
<svg class="abs" style="left:686px;top:43px;overflow:visible" width="40" height="40" viewBox="0 0 40 40"><path d="M16.8 24.4 V12 H29.9" fill="none" stroke="#cfcfcf" stroke-width="1.3"/><path d="M33.6 13 L34.3 13.9 L25.5 24.5 L23.2 22.6 Z" fill="#f2f2f2"/><path d="M23 23 L25.2 24.9 L23.6 26.6 L21.6 24.8 Z" fill="#d8d8d8"/><path d="M21.4 25.1 L23.3 26.9 C22 29 19.5 29.6 17.6 29.2 C18.8 28 19.2 26 21.4 25.1 Z" fill="#2487df"/></svg>
<svg class="abs" style="left:723.7px;top:54px;overflow:visible" width="20" height="20" viewBox="-10 -10 20 20"><path d="M-4.3 -4.3 L4.3 4.3 M4.3 -4.3 L-4.3 4.3" stroke="#a6a6a6" stroke-width="2" fill="none"/></svg>
<svg class="abs" style="left:780px;top:55px;overflow:visible" width="20" height="20" viewBox="0 0 20 20"><rect x="1.7" y="0" width="1.2" height="15.6" fill="#2b6e30"/><rect x="5" y="0.7" width="8" height="3.1" fill="#f0f0f0"/><rect x="5" y="6.2" width="11.4" height="3.5" fill="#f0f0f0"/><rect x="5" y="12" width="7" height="3.1" fill="#f0f0f0"/></svg>
<div class="abs" style="left:850.5px;top:-8px;width:90.7px;height:273.3px;background:#2d2d2d;border:1px solid #242424;border-radius:7px;box-shadow:0 1px 4px rgba(0,0,0,0.35)"></div>
<div class="abs" style="left:851.3px;top:229px;width:89.4px;height:31.8px;background:#1555a3;"></div>
<span class="tx" style="left:860.30px;top:10.87px;font-size:13.4px;color:#eaeaea;transform:scaleX(1.0230);">cm</span>
<span class="tx" style="left:860.60px;top:43.02px;font-size:13.4px;color:#eaeaea;transform:scaleX(0.9950);">in</span>
<span class="tx" style="left:860.60px;top:75.17px;font-size:13.4px;color:#eaeaea;transform:scaleX(1.0457);">pt</span>
<span class="tx" style="left:860.60px;top:107.32px;font-size:13.4px;color:#eaeaea;transform:scaleX(0.9479);">pc</span>
<span class="tx" style="left:860.60px;top:139.47px;font-size:13.4px;color:#eaeaea;transform:scaleX(1.0040);">mm</span>
<span class="tx" style="left:860.60px;top:171.62px;font-size:13.4px;color:#eaeaea;transform:scaleX(0.8771);">px</span>
<span class="tx" style="left:860.30px;top:203.77px;font-size:13.4px;color:#eaeaea;transform:scaleX(0.8972);">%</span>
<span class="tx" style="left:861.00px;top:235.92px;font-size:13.4px;color:#eaeaea;transform:scaleX(0.9906);">Hairline</span>
<div class="abs" style="left:862px;top:215.8px;width:53.4px;height:53.4px;background:rgba(255,246,0,0.5);border-radius:50%"></div>
<svg class="abs" style="left:888.7px;top:242.8px;overflow:visible" width="16" height="22" viewBox="0 0 16 22"><path d="M0 0 V17.2 L3.9 13.6 L6.9 19.9 L9.4 18.8 L6.5 12.6 H11.4 Z" fill="#f3f26c" stroke="#bdb930" stroke-width="0.5"/></svg>
</div>
</body></html>
